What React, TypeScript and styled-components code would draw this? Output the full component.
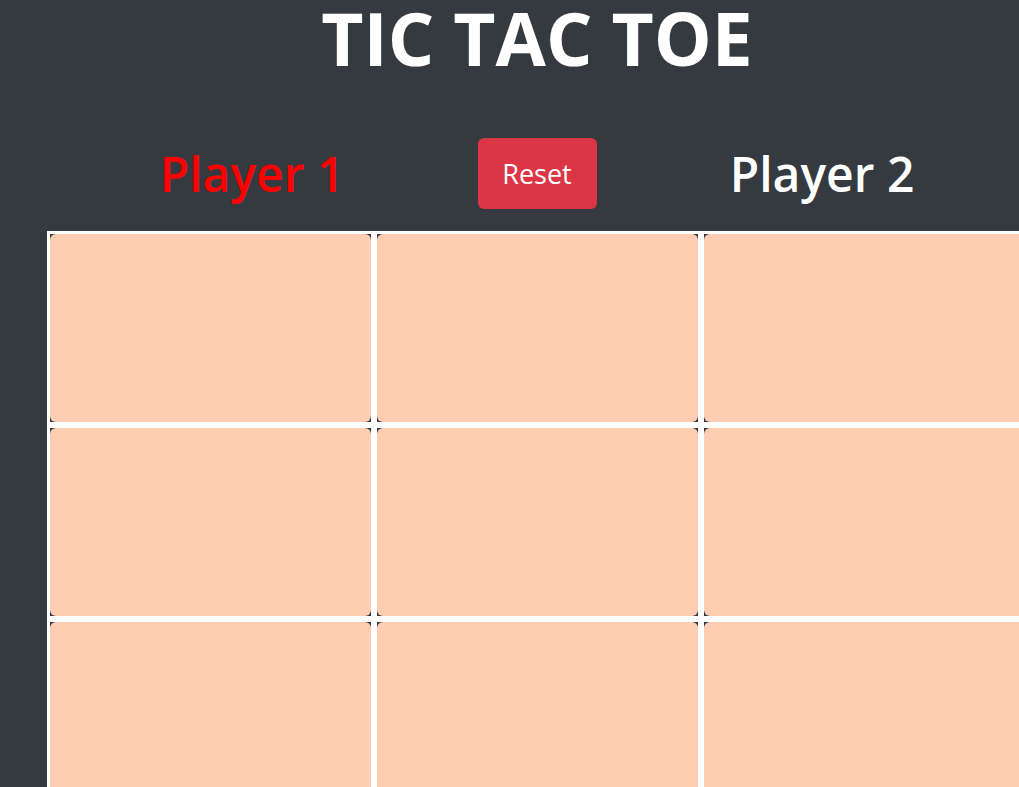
import React from "react";
import styled, { createGlobalStyle } from "styled-components";

const GlobalStyle = createGlobalStyle`
  html, body {
    margin: 0;
    padding: 0;
    background: #343a40;
    overflow: hidden;
  }
  body {
    font-family: "Open Sans", "Noto Sans", sans-serif;
  }
`;

const Wrapper = styled.div`
  width: 980px;
  margin-left: 47px;
  min-height: 787px;
`;

const Title = styled.h1`
  margin: 0;
  padding-top: 1px;
  font-size: 73px;
  line-height: 1;
  font-weight: 700;
  color: #ffffff;
  text-align: center;
`;

const PlayersRow = styled.div`
  display: grid;
  grid-template-columns: repeat(3, 285px);
  justify-content: center;
  align-items: center;
  height: 71px;
  margin-top: 64px;
  margin-bottom: 22px;
`;

const PlayerName = styled.div<{ $active?: boolean }>`
  text-align: center;
  font-size: 48px;
  font-weight: 600;
  color: ${(p) => (p.$active ? "#ff0000" : "#ffffff")};
  line-height: 1;
`;

const ResetButton = styled.button`
  justify-self: center;
  width: 119px;
  height: 71px;
  border: none;
  border-radius: 6px;
  background: #dc3545;
  color: #ffffff;
  font-family: "Open Sans", "Noto Sans", sans-serif;
  font-size: 27px;
  cursor: pointer;
`;

const Board = styled.div`
  display: grid;
  grid-template-columns: repeat(3, 327px);
  grid-auto-rows: 194px;
`;

const Cell = styled.div`
  border: 3px solid #ffffff;
  background: #343a40;
  display: flex;
`;

const Tile = styled.button`
  flex: 1;
  border: none;
  padding: 0;
  border-radius: 6px;
  background: #ffcdb2;
  cursor: pointer;
`;

export default function App() {
  const cells = Array.from({ length: 9 });
  return (
    <>
      <GlobalStyle />
      <Wrapper>
        <Title>TIC TAC TOE</Title>
        <PlayersRow>
          <PlayerName $active>Player 1</PlayerName>
          <ResetButton>Reset</ResetButton>
          <PlayerName>Player 2</PlayerName>
        </PlayersRow>
        <Board>
          {cells.map((_, i) => (
            <Cell key={i}>
              <Tile aria-label={`cell ${i + 1}`} />
            </Cell>
          ))}
        </Board>
      </Wrapper>
    </>
  );
}
